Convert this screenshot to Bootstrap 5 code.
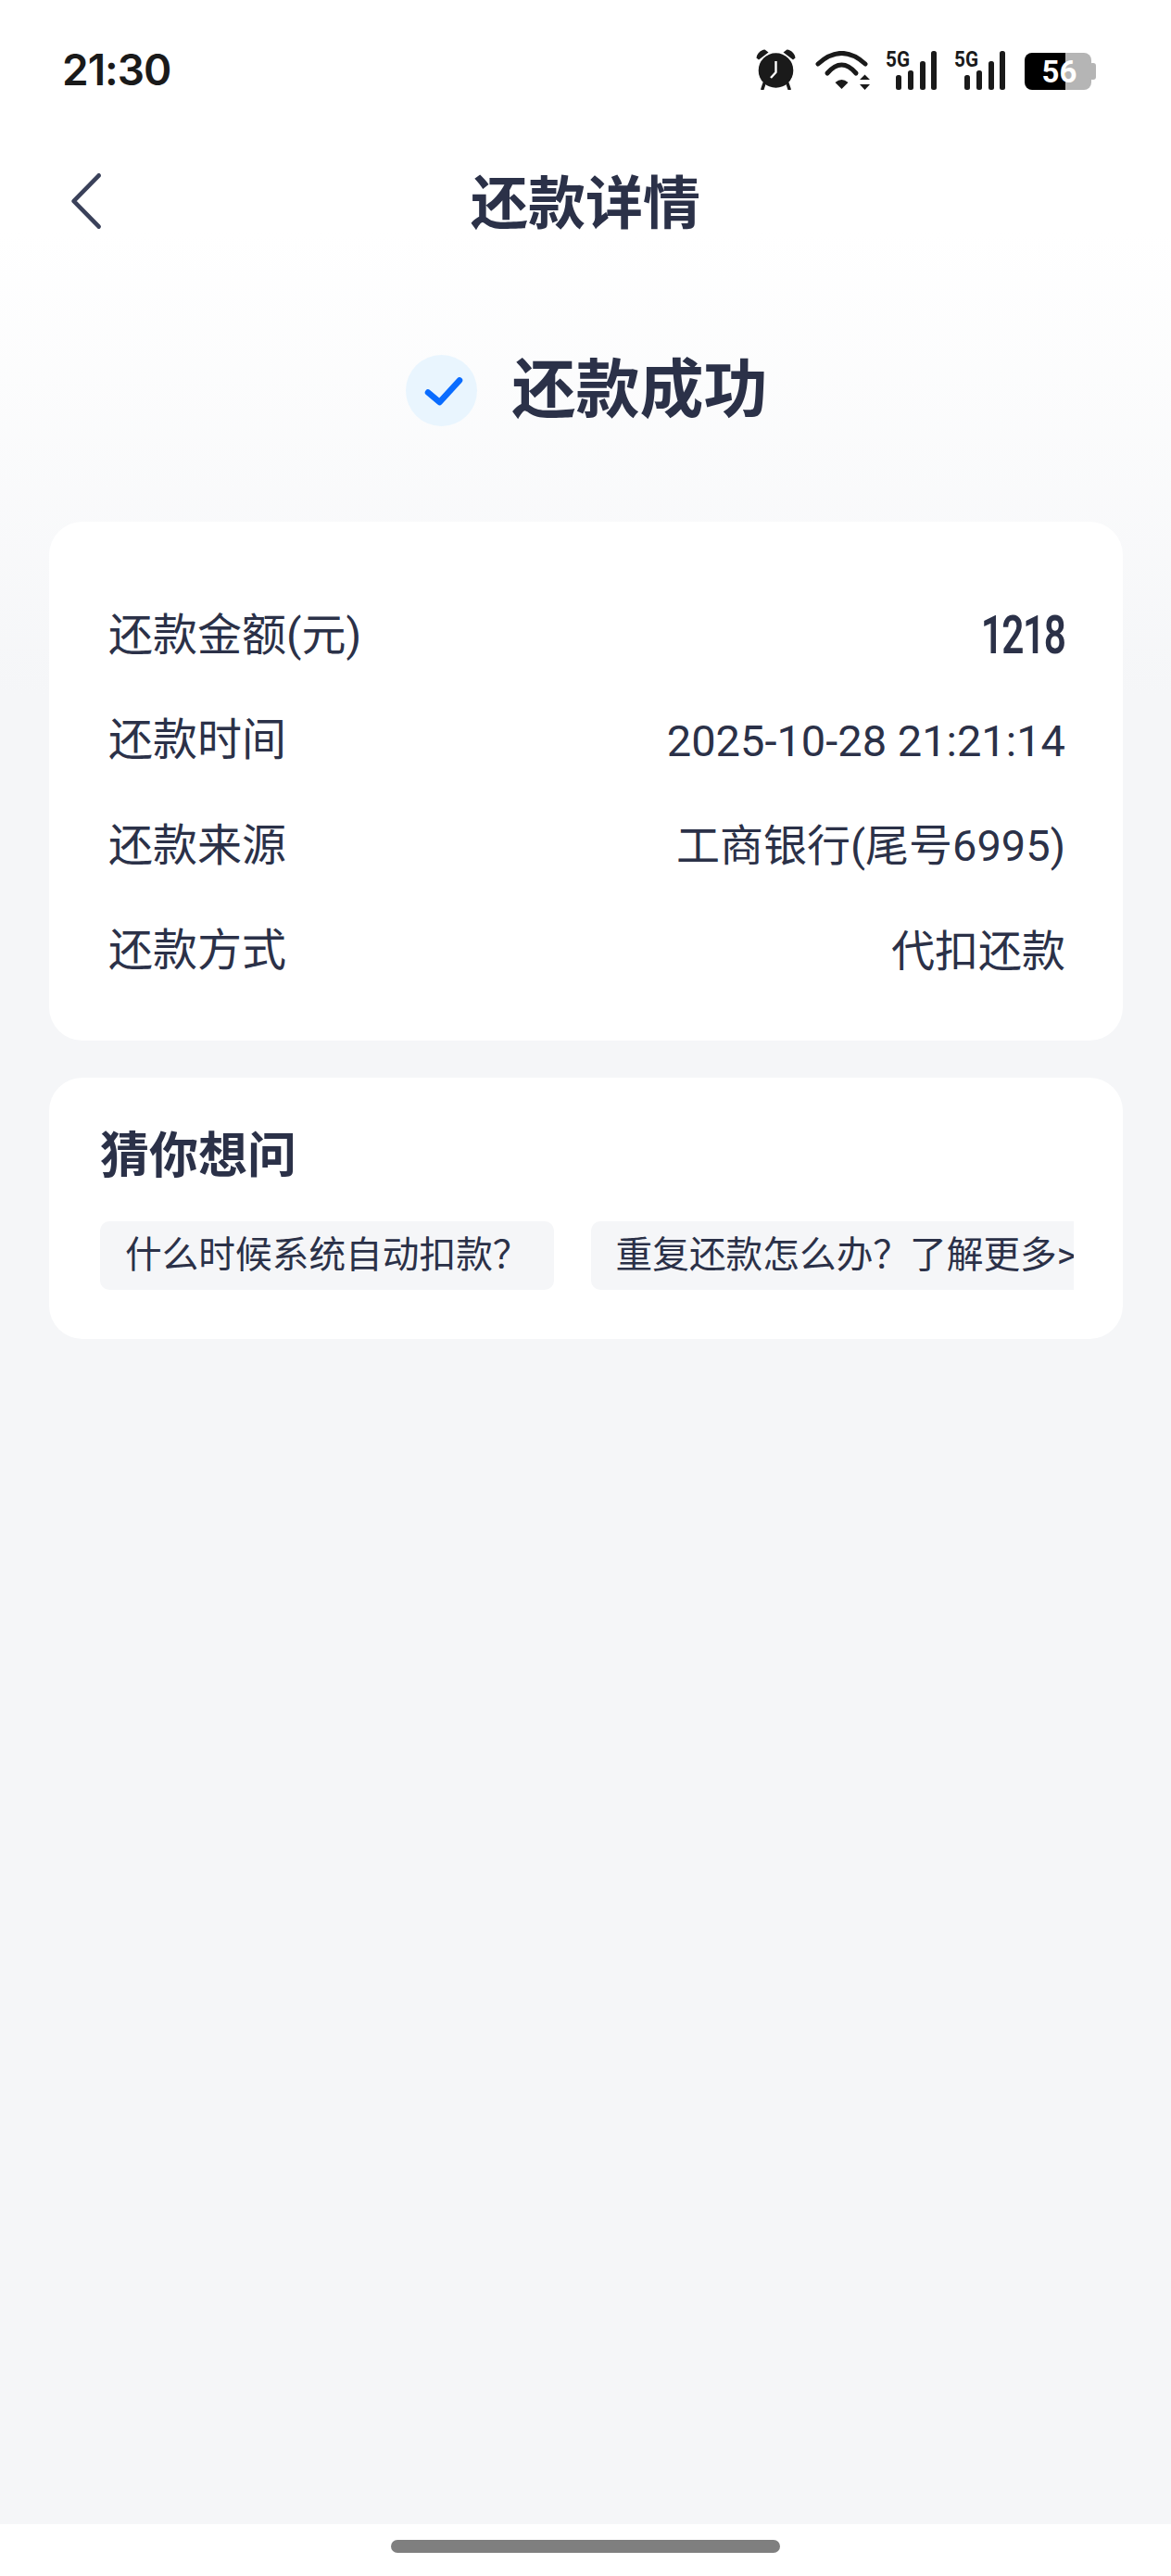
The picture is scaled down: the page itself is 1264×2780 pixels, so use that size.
<!DOCTYPE html>
<html lang="zh-CN">
<head>
  <meta charset="UTF-8" />
  <title>还款详情</title>
  <link href="https://cdn.jsdelivr.net/npm/bootstrap@5.3.0/dist/css/bootstrap.min.css" rel="stylesheet" />
  <style>
    body {
      font-family: Roboto, "Noto Sans CJK SC", sans-serif;
      color: #2b3148;
      background: #fff;
      min-height: 100vh;
    }
    .page-main {
      background: linear-gradient(to bottom, #fff 250px, #f5f6f8 750px);
    }
    .status-bar { height: 150px; padding: 0 81px 0 67px; }
    .status-time { font-family: Inter, Roboto, sans-serif; font-size: 46px; font-weight: 600; letter-spacing: -1px; color: #1a1a1a; line-height: 1; }
    .status-icons { height: 44px; }
    .ic-wifi { margin-left: 21px; }
    .ic-sig1 { margin-left: 17px; }
    .ic-sig2 { margin-left: 19px; }
    .ic-batt { margin-left: 21px; }
    .nav-head { display: grid; grid-template-columns: 1fr auto 1fr; height: 142px; padding: 0 74px; }
    .nav-back { margin-bottom: 8px; }
    .nav-title { font-size: 62px; font-weight: 700; line-height: 1; margin: 0; }
    .result-row { height: 258px; gap: 38px; margin-bottom: 13px; padding-left: 2px; }
    .result-dot { width: 77px; height: 77px; background: #e9f5fe; border-radius: 50%; }
    .result-text { font-size: 69px; font-weight: 700; line-height: 1; }
    .info-card { margin: 0 52px 40px 53px; border: 0; border-radius: 36px; background: #fff; }
    .detail-body { padding: 66px 62px 40px 64px; }
    .detail-row { height: 113.5px; font-size: 48px; line-height: 1; }
    .detail-value { font-size: 47px; }
    .detail-cn { font-size: 47px; }
    .detail-amount { display: inline-block; font-size: 58px; font-weight: 600; letter-spacing: -2px; margin-top: -2px; transform: scaleX(0.73); transform-origin: right center; }
    .guess-body { height: 282px; padding: 59px 53px 0 55px; }
    .guess-title { font-size: 53px; font-weight: 700; line-height: 1; margin: 0 0 39px; height: 57px; }
    .chip-scroll { gap: 40px; overflow: hidden; }
    .ask-chip { flex: none; height: 74px; line-height: 74px; font-size: 39.7px; padding: 0 26px 0 27px; background: #f5f6f8; border-radius: 10px; white-space: nowrap; }
    .page-foot { height: 56px; padding-top: 17px; background: #fff; }
    .home-bar { width: 420px; height: 14px; border-radius: 7px; background: #7f7f7f; }
  </style>
</head>
<body class="d-flex flex-column">
  <main class="page-main flex-grow-1">
    <div class="status-bar d-flex align-items-center justify-content-between">
      <span class="status-time">21:30</span>
      <div class="status-icons d-flex align-items-end">
        <svg width="43" height="44" viewBox="0 0 43 44">
          <path d="M0.5 9.5C1 5 5 0.8 9.5 0.5L13.5 3.5L3 11.5Z" fill="#1a1a1a"/>
          <path d="M42.5 9.5C42 5 38 0.8 33.5 0.5L29.5 3.5L40 11.5Z" fill="#1a1a1a"/>
          <circle cx="21.5" cy="23" r="18.8" fill="#1a1a1a"/>
          <path d="M9 37L7 43M34 37L36 43" stroke="#1a1a1a" stroke-width="3.5" stroke-linecap="round"/>
          <path d="M21.5 13V25L16 31" fill="none" stroke="#fff" stroke-width="2.4" stroke-linejoin="round"/>
        </svg>
        <svg class="ic-wifi" width="59" height="42" viewBox="0 0 59 42">
          <path d="M3 14Q28.5 -9 54 14" fill="none" stroke="#1a1a1a" stroke-width="5" stroke-linecap="round"/>
          <path d="M13 24Q28.5 6 44 24" fill="none" stroke="#1a1a1a" stroke-width="5" stroke-linecap="round"/>
          <path d="M21.5 34Q28.5 28 35.5 34L28.5 41Z" fill="#1a1a1a"/>
          <path d="M48 31L53.5 25.5L59 31ZM48 36H59L53.5 42Z" fill="#1a1a1a"/>
        </svg>
        <svg class="ic-sig1" width="55" height="48" viewBox="0 -4 55 48">
          <text x="0" y="19" font-family="Roboto, sans-serif" font-weight="700" font-size="24" textLength="26" lengthAdjust="spacingAndGlyphs" fill="#1a1a1a">5G</text>
          <rect x="11" y="28" width="6" height="16" rx="2.5" fill="#1a1a1a"/>
          <rect x="24" y="23" width="6" height="21" rx="2.5" fill="#1a1a1a"/>
          <rect x="37" y="13" width="6" height="31" rx="2.5" fill="#1a1a1a"/>
          <rect x="49" y="2" width="6" height="42" rx="2.5" fill="#1a1a1a"/>
        </svg>
        <svg class="ic-sig2" width="55" height="48" viewBox="0 -4 55 48">
          <text x="0" y="19" font-family="Roboto, sans-serif" font-weight="700" font-size="24" textLength="26" lengthAdjust="spacingAndGlyphs" fill="#1a1a1a">5G</text>
          <rect x="11" y="28" width="6" height="16" rx="2.5" fill="#1a1a1a"/>
          <rect x="24" y="23" width="6" height="21" rx="2.5" fill="#1a1a1a"/>
          <rect x="37" y="13" width="6" height="31" rx="2.5" fill="#1a1a1a"/>
          <rect x="49" y="2" width="6" height="42" rx="2.5" fill="#1a1a1a"/>
        </svg>
        <svg class="ic-batt" width="77" height="40" viewBox="0 0 77 40">
          <rect x="30" y="0" width="42" height="40" rx="8" fill="#b5b5b5"/>
          <rect x="70" y="11" width="7" height="18" rx="3" fill="#b5b5b5"/>
          <path d="M8 0H44V40H8A8 8 0 0 1 0 32V8A8 8 0 0 1 8 0Z" fill="#000"/>
          <text x="37.5" y="31.5" text-anchor="middle" font-family="Roboto, sans-serif" font-weight="700" font-size="33" fill="#fff">56</text>
        </svg>
      </div>
    </div>

    <div class="nav-head align-items-center">
      <svg class="nav-back" width="37" height="60" viewBox="0 0 37 60">
        <path d="M34 2.5L4 30L34 57.5" transform="translate(2 0) scale(0.9 1)" fill="none" stroke="#3a415a" stroke-width="5" stroke-linecap="round" stroke-linejoin="round"/>
      </svg>
      <h1 class="nav-title">还款详情</h1>
      <span></span>
    </div>

    <div class="result-row d-flex align-items-center justify-content-center">
      <span class="result-dot d-flex align-items-center justify-content-center">
        <svg width="77" height="77" viewBox="0 0 77 77">
          <path d="M24 40.5L36.5 51L58 27.5" fill="none" stroke="#0a6cff" stroke-width="6.5" stroke-linecap="round" stroke-linejoin="round"/>
        </svg>
      </span>
      <span class="result-text">还款成功</span>
    </div>

    <div class="card info-card">
      <div class="detail-body">
        <div class="detail-row d-flex justify-content-between align-items-center">
          <span>还款金额(元)</span>
          <span class="detail-amount">1218</span>
        </div>
        <div class="detail-row d-flex justify-content-between align-items-center">
          <span>还款时间</span>
          <span class="detail-value">2025-10-28 21:21:14</span>
        </div>
        <div class="detail-row d-flex justify-content-between align-items-center">
          <span>还款来源</span>
          <span class="detail-cn">工商银行(尾号6995)</span>
        </div>
        <div class="detail-row d-flex justify-content-between align-items-center">
          <span>还款方式</span>
          <span class="detail-cn">代扣还款</span>
        </div>
      </div>
    </div>

    <div class="card info-card">
      <div class="guess-body">
        <h2 class="guess-title">猜你想问</h2>
        <div class="chip-scroll d-flex">
          <span class="ask-chip">什么时候系统自动扣款？</span>
          <span class="ask-chip">重复还款怎么办？了解更多&gt;</span>
        </div>
      </div>
    </div>
  </main>
  <footer class="page-foot d-flex justify-content-center">
    <div class="home-bar"></div>
  </footer>
  <script src="https://cdn.jsdelivr.net/npm/bootstrap@5.3.0/dist/js/bootstrap.bundle.min.js"></script>
</body>
</html>
